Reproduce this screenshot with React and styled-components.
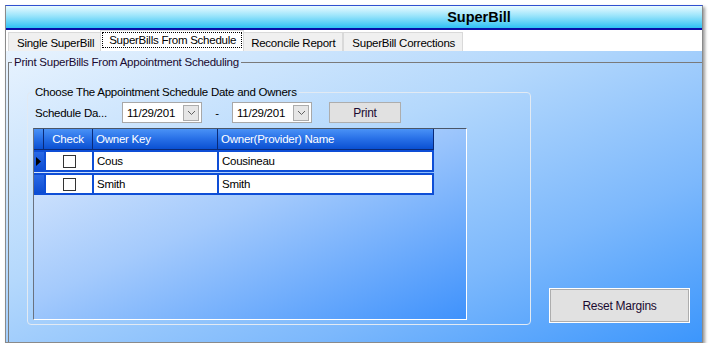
import React from "react";
import styled, { createGlobalStyle } from "styled-components";

const GlobalStyle = createGlobalStyle`
  body {
    margin: 0;
    background: #ffffff;
    font-family: "Liberation Sans", Arial, sans-serif;
    font-size: 11.5px;
    letter-spacing: -0.25px;
    color: #000;
  }
`;

const Window = styled.div`
  margin: 5px 0 0 5px;
  width: 698px;
  height: 338px;
  box-sizing: border-box;
  border: 1px solid #8a8a8a;
  border-top-color: #3050d0;
  box-shadow: 2px 2px 3px rgba(0, 0, 0, 0.4);
  display: flex;
  flex-direction: column;
  background: #fff;
`;

const TitleBar = styled.div`
  height: 22px;
  border-bottom: 2px solid #0a10a8;
  background: linear-gradient(to bottom, #eafbff 0%, #9ae4fb 45%, #2ec2f4 100%);
  display: flex;
  align-items: center;
  justify-content: center;
  padding-left: 250px;
  font-weight: bold;
  font-size: 14.5px;
  letter-spacing: 0;
`;

const TabStrip = styled.div`
  height: 21px;
  display: flex;
  align-items: flex-end;
  padding-left: 2px;
  background: #fff;
`;

const Tab = styled.div`
  position: relative;
  box-sizing: border-box;
  height: ${(p) => (p.$active ? "21px" : "19px")};
  margin: ${(p) => (p.$active ? "0 -2px" : "0")};
  padding: ${(p) => (p.$active ? "2px 2px 0" : "1px 7px 0 8px")};
  border: 1px solid #d9d9d9;
  border-bottom: none;
  background: ${(p) => (p.$active ? "#ffffff" : "#f0f0f0")};
  z-index: ${(p) => (p.$active ? 1 : 0)};
  display: flex;
  align-items: ${(p) => (p.$active ? "flex-start" : "center")};
  white-space: nowrap;
`;

const FocusBox = styled.span`
  outline: 1px dotted #000;
  outline-offset: 0;
  padding: 0 5px 0 6px;
  line-height: 14px;
`;

const Content = styled.div`
  flex: 1;
  padding: 4px 0 0 2px;
  background: linear-gradient(to bottom right, #e8f3fe 0%, #b4d8fc 40%, #7cb8fc 72%, #3c96fc 100%);
  display: flex;
  flex-direction: column;
`;

const OuterGroup = styled.fieldset`
  flex: 1;
  margin: 0;
  padding: 0;
  border: none;
  border-top: 1px solid #7a7a7a;
  border-left: 1px solid #7a7a7a;
  min-width: 0;
`;

const OuterLegend = styled.legend`
  margin-left: 3px;
  padding: 0 2px;
  line-height: 14px;
  color: #1a0a30;
`;

const OuterBody = styled.div`
  display: flex;
  padding: 16px 0 0 18px;
`;

const InnerGroup = styled.fieldset`
  width: 504px;
  box-sizing: border-box;
  height: 240px;
  margin: 0;
  padding: 0 5px 0 5px;
  border: 1px solid #e2eaf3;
  border-radius: 4px;
  min-width: 0;
`;

const InnerLegend = styled.legend`
  margin-left: 0;
  padding: 0 2px;
  line-height: 14px;
`;

const ScheduleRow = styled.div`
  display: flex;
  align-items: center;
  height: 21px;
  margin-top: 3px;
  padding-left: 2px;
`;

const FieldLabel = styled.span`
  width: 87px;
`;

const DateBox = styled.div`
  width: 80px;
  height: 21px;
  box-sizing: border-box;
  border: 1px solid #a8a8a8;
  background: #fff;
  display: flex;
  align-items: center;
  justify-content: space-between;
  padding: 0 2px 0 4px;
`;

const DropButton = styled.div`
  width: 16px;
  height: 16px;
  box-sizing: border-box;
  border: 1px solid #acacac;
  background: #e6e6e6;
  display: flex;
  align-items: center;
  justify-content: center;
`;

const Dash = styled.span`
  width: 30px;
  text-align: center;
`;

const PushButton = styled.button`
  box-sizing: border-box;
  width: ${(p) => p.$w}px;
  height: ${(p) => p.$h}px;
  margin-left: ${(p) => p.$ml || 0}px;
  background: #e1e1e1;
  border: 1px solid #adadad;
  box-shadow: ${(p) => (p.$outlined ? "0 0 0 1px #ffffff" : "none")};
  font-family: inherit;
  font-size: 12px;
  letter-spacing: -0.25px;
  color: #1a0a30;
  padding: 0;
`;

const Grid = styled.div`
  margin-top: 5px;
  width: 434px;
  height: 192px;
  box-sizing: border-box;
  border-top: 1px solid #4a5668;
  border-left: 1px solid #6a7280;
  border-right: 1px solid #ffffff;
  border-bottom: 1px solid #ffffff;
  background: linear-gradient(to bottom right, #e2edfd 0%, #a4cafc 45%, #3f92fc 100%);
`;

const HeaderRow = styled.div`
  display: grid;
  grid-template-columns: 10px 49px 125px 216px;
  width: 400px;
  height: 21px;
  box-sizing: border-box;
  border-bottom: 1px solid #0a2a78;
`;

const HeaderCell = styled.div`
  box-sizing: border-box;
  border-right: 1px solid #0a2a78;
  background: linear-gradient(to bottom, #4a92f6 0%, #2a72e8 45%, #0a50d2 100%);
  color: #fff;
  display: flex;
  align-items: center;
  justify-content: ${(p) => (p.$center ? "center" : "flex-start")};
  padding-left: ${(p) => (p.$center ? 0 : 3)}px;
  white-space: nowrap;
`;

const DataRow = styled.div`
  display: grid;
  grid-template-columns: 10px 46px 123px 213px;
  column-gap: 2px;
  width: 400px;
  height: 22px;
  box-sizing: border-box;
  padding: 2px 2px 2px 0;
  margin-bottom: 1px;
  background: #0e4ed6;
`;

const RowHead = styled.div`
  background: linear-gradient(to bottom, #2a6ae6, #0c4cd2);
  display: flex;
  align-items: center;
  padding-left: 2px;
`;

const Cell = styled.div`
  background: #fff;
  display: flex;
  align-items: center;
  justify-content: ${(p) => (p.$center ? "center" : "flex-start")};
  padding-left: ${(p) => (p.$center ? 0 : 3)}px;
`;

const CheckBox = styled.div`
  width: 13px;
  height: 13px;
  box-sizing: border-box;
  border: 1px solid #333;
  background: #fff;
`;

const SideColumn = styled.div`
  display: flex;
  align-items: flex-end;
  padding-bottom: 3px;
`;

const Chevron = () => (
  <svg width="9" height="6" viewBox="0 0 9 6">
    <polyline points="1,1 4.5,4.5 8,1" fill="none" stroke="#606060" strokeWidth="1" />
  </svg>
);

const Pointer = () => (
  <svg width="5" height="9" viewBox="0 0 5 9">
    <polygon points="0,0 5,4.5 0,9" fill="#000" />
  </svg>
);

const DatePicker = ({ value }) => (
  <DateBox>
    <span>{value}</span>
    <DropButton>
      <Chevron />
    </DropButton>
  </DateBox>
);

const rows = [
  { key: "Cous", name: "Cousineau", current: true },
  { key: "Smith", name: "Smith" },
];

const tabs = ["Single SuperBill", "SuperBills From Schedule", "Reconcile Report", "SuperBill Corrections"];

export default function App() {
  return (
    <>
      <GlobalStyle />
      <Window>
        <TitleBar>SuperBill</TitleBar>
        <TabStrip>
          {tabs.map((t, i) =>
            i === 1 ? (
              <Tab key={t} $active>
                <FocusBox>{t}</FocusBox>
              </Tab>
            ) : (
              <Tab key={t}>{t}</Tab>
            )
          )}
        </TabStrip>
        <Content>
          <OuterGroup>
            <OuterLegend>Print SuperBills From Appointment Scheduling</OuterLegend>
            <OuterBody>
              <InnerGroup>
                <InnerLegend>Choose The Appointment Schedule Date and Owners</InnerLegend>
                <ScheduleRow>
                  <FieldLabel>Schedule Da...</FieldLabel>
                  <DatePicker value="11/29/201" />
                  <Dash>-</Dash>
                  <DatePicker value="11/29/201" />
                  <PushButton $w={72} $h={21} $ml={17}>Print</PushButton>
                </ScheduleRow>
                <Grid>
                  <HeaderRow>
                    <HeaderCell />
                    <HeaderCell $center>Check</HeaderCell>
                    <HeaderCell>Owner Key</HeaderCell>
                    <HeaderCell>Owner(Provider) Name</HeaderCell>
                  </HeaderRow>
                  {rows.map((r) => (
                    <DataRow key={r.key}>
                      <RowHead>{r.current && <Pointer />}</RowHead>
                      <Cell $center>
                        <CheckBox />
                      </Cell>
                      <Cell>{r.key}</Cell>
                      <Cell>{r.name}</Cell>
                    </DataRow>
                  ))}
                </Grid>
              </InnerGroup>
              <SideColumn>
                <PushButton $w={139} $h={33} $ml={19} $outlined>
                  Reset Margins
                </PushButton>
              </SideColumn>
            </OuterBody>
          </OuterGroup>
        </Content>
      </Window>
    </>
  );
}
